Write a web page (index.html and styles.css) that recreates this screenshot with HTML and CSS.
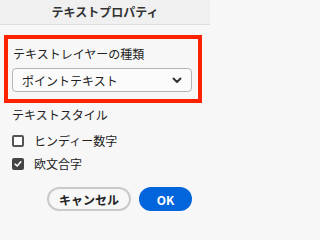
FILE: index.html
```html
<!DOCTYPE html>
<html lang="ja">
<head>
<meta charset="utf-8">
<link rel="stylesheet" href="styles.css">
</head>
<body>
<div class="dialog">
  <div class="titlebar">テキストプロパティ</div>
  <div class="content">
    <div class="group">
      <div class="label">テキストレイヤーの種類</div>
      <div class="select">
        <span class="select-text">ポイントテキスト</span>
        <svg class="chev" width="10" height="7" viewBox="0 0 10 7"><path d="M1.5 1.5 L5 5 L8.5 1.5" fill="none" stroke="#333" stroke-width="2" stroke-linecap="round" stroke-linejoin="round"/></svg>
      </div>
    </div>
    <div class="section">テキストスタイル</div>
    <div class="row"><span class="cb"></span><span class="cb-label">ヒンディー数字</span></div>
    <div class="row"><span class="cb checked"><svg width="8" height="8" viewBox="0 0 8 8"><path d="M1.2 4.2 L3.2 6 L6.8 1.8" fill="none" stroke="#fff" stroke-width="1.6" stroke-linecap="round" stroke-linejoin="round"/></svg></span><span class="cb-label">欧文合字</span></div>
    <div class="buttons">
      <div class="btn cancel">キャンセル</div>
      <div class="btn ok">OK</div>
    </div>
  </div>
</div>
</body>
</html>
```
FILE: styles.css
```css
html, body {
  margin: 0;
  padding: 0;
  background: #f7f7f7;
}
body {
  font-family: "Noto Sans CJK JP", "Noto Sans", sans-serif;
  color: #222;
  width: 210px;
  height: 225px;
  overflow: hidden;
}
.titlebar {
  height: 24px;
  line-height: 23px;
  background: #f0f0f0;
  border-bottom: 1px solid #dcdcdc;
  text-align: center;
  font-size: 12px;
  font-weight: bold;
  color: #333;
}
.content {
  padding-top: 10px;
}
.group {
  box-sizing: border-box;
  margin-left: 4px;
  width: 198px;
  border: 4px solid #ff2200;
  padding: 7px 0 7px 4px;
}
.label {
  font-size: 12px;
  line-height: 16px;
  height: 16px;
  margin-left: 1px;
}
.select {
  box-sizing: border-box;
  margin-top: 6px;
  width: 180px;
  height: 24px;
  border: 1px solid #b4b4b4;
  border-radius: 4px;
  background: #fbfbfb;
  display: flex;
  align-items: center;
  justify-content: space-between;
  padding: 0 9px 0 9px;
}
.select-text {
  font-size: 12px;
}
.chev {
  display: block;
}
.section {
  margin-top: 4px;
  margin-left: 12px;
  font-size: 12px;
  line-height: 16px;
  height: 16px;
}
.row {
  margin-left: 12px;
  height: 23px;
  display: flex;
  align-items: center;
  gap: 10px;
  font-size: 12px;
}
.section + .row {
  margin-top: 6px;
}
.cb {
  box-sizing: border-box;
  width: 12px;
  height: 12px;
  border: 2px solid #555;
  border-radius: 2px;
  background: #fff;
  display: flex;
  align-items: center;
  justify-content: center;
}
.cb.checked {
  background: #444;
  border-color: #444;
}
.cb svg {
  display: block;
}
.buttons {
  margin-top: 12px;
  display: flex;
  justify-content: flex-end;
  gap: 8px;
  padding-right: 18px;
}
.btn {
  box-sizing: border-box;
  height: 24px;
  border-radius: 12px;
  font-size: 12px;
  font-weight: bold;
  display: flex;
  align-items: center;
  justify-content: center;
}
.cancel {
  width: 84px;
  border: 2px solid #cacaca;
  color: #222;
  background: #f7f7f7;
}
.ok {
  width: 53px;
  background: #0265dc;
  color: #fff;
}
```
